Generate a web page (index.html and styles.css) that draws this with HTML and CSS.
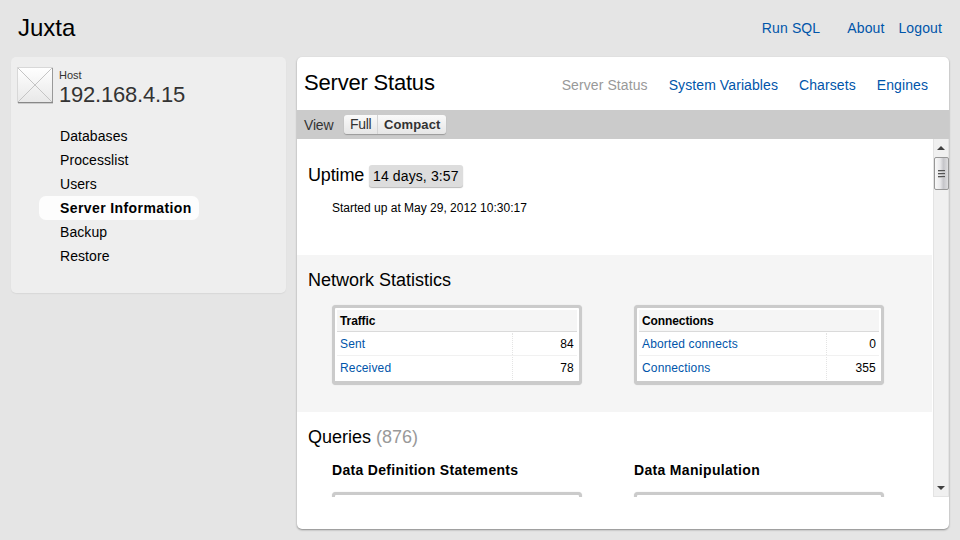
FILE: index.html
```
<!DOCTYPE html>
<html lang="en">
<head>
<meta charset="utf-8">
<title>Juxta</title>
<link rel="stylesheet" href="styles.css">
</head>
<body>
<header class="top">
  <h1 class="brand">Juxta</h1>
  <nav class="top-nav"><a class="run">Run SQL</a><a class="about">About</a><a class="logout">Logout</a></nav>
</header>
<div class="columns">
  <aside class="sidebar">
    <div class="host">
      <svg class="host-icon" width="37" height="38" viewBox="0 0 37 38">
        <defs><linearGradient id="tile" x1="0" y1="0" x2="0" y2="1"><stop offset="0" stop-color="#fff"/><stop offset="1" stop-color="#e8e8e8"/></linearGradient></defs>
        <rect x=".5" y=".5" width="35" height="35" fill="url(#tile)" stroke="#d8d8d8"/>
        <path d="M1 1L35 35M35 1L1 35" stroke="#c4c4c4" fill="none"/>
        <path d="M35.5 1V36" stroke="#999"/><path d="M1 35.5H36" stroke="#888"/><path d="M1 36.5H36" stroke="#ccc"/>
      </svg>
      <div><div class="host-label">Host</div><div class="host-ip">192.168.4.15</div></div>
    </div>
    <nav class="menu">
      <a>Databases</a><a>Processlist</a><a>Users</a><a class="current">Server Information</a><a>Backup</a><a>Restore</a>
    </nav>
  </aside>
  <main class="panel">
    <div class="panel-head">
      <h2 class="title">Server Status</h2>
      <nav class="tabs"><a class="active">Server Status</a><a class="vars">System Variables</a><a class="charsets">Charsets</a><a class="engines">Engines</a></nav>
    </div>
    <div class="view-bar">
      <span class="view-label">View</span>
      <div class="switch"><span class="full">Full</span><span class="compact">Compact</span></div>
    </div>
    <div class="viewport">
      <div class="content">
        <section class="uptime">
          <h3 class="heading"><span class="uptime-word">Uptime</span><span class="badge">14 days, 3:57</span></h3>
          <p class="started">Started up at May 29, 2012 10:30:17</p>
        </section>
        <section class="network">
          <h3 class="heading network-title">Network Statistics</h3>
          <div class="pair">
            <div class="box">
              <div class="box-head">Traffic</div>
              <div class="row"><a>Sent</a><span class="value">84</span></div>
              <div class="row"><a>Received</a><span class="value">78</span></div>
            </div>
            <div class="box narrow">
              <div class="box-head">Connections</div>
              <div class="row"><a>Aborted connects</a><span class="value">0</span></div>
              <div class="row"><a>Connections</a><span class="value">355</span></div>
            </div>
          </div>
        </section>
        <section class="queries">
          <h3 class="heading">Queries <span class="count">(876)</span></h3>
          <div class="pair">
            <div class="group"><h4 class="ddl">Data Definition Statements</h4><div class="box"></div></div>
            <div class="group"><h4 class="dml">Data Manipulation</h4><div class="box"></div></div>
          </div>
        </section>
      </div>
      <div class="scrollbar">
        <svg class="arrow" width="8" height="4" viewBox="0 0 8 4"><path d="M0 4L4 0L8 4Z" fill="#404040"/></svg>
        <div class="thumb"><i></i><i></i><i></i></div>
        <svg class="arrow down" width="8" height="4" viewBox="0 0 8 4"><path d="M0 0H8L4 4Z" fill="#404040"/></svg>
      </div>
    </div>
  </main>
</div>
</body>
</html>
```
FILE: styles.css
```
* { box-sizing: border-box; }
body { margin: 0; width: 960px; height: 540px; overflow: hidden; background: #e5e5e5; color: #000; font: 14px/16px "Liberation Sans", Arial, sans-serif; white-space: nowrap; }
h1, h2, h3, h4, p { margin: 0; font-weight: normal; }
a { color: #0055aa; }

.top { display: flex; justify-content: space-between; height: 57px; padding: 14px 18px 0; }
.brand { font-size: 24px; line-height: 28px; }
.top-nav { display: flex; padding-top: 6px; }
.top-nav a { letter-spacing: .12px; }
.run { margin-right: 27px; }
.about { margin-right: 14px; }

.columns { display: flex; gap: 11px; padding-left: 11px; align-items: flex-start; }
.sidebar { width: 275px; height: 236px; background: #eee; border-radius: 5px; box-shadow: 0 1px 1px #d8d8d8; }
.host { display: flex; height: 67px; padding: 10px 0 0 6px; }
.host-icon { margin-right: 5px; }
.host-label { color: #333; font-size: 11px; line-height: 13px; padding-top: 2px; }
.host-ip { color: #333; font-size: 22px; line-height: 26px; letter-spacing: -.2px; }
.menu { display: flex; flex-direction: column; align-items: flex-start; padding-left: 28px; }
.menu a { color: #000; height: 24px; line-height: 24px; padding: 0 7px 0 21px; letter-spacing: .07px; }
.menu .current { background: #fdfdfd; border-radius: 7px; font-weight: bold; letter-spacing: .4px; }

.panel { width: 652px; height: 472px; background: #fff; border-radius: 5px; box-shadow: 0 1px 2px #888; }
.panel-head { display: flex; justify-content: space-between; height: 53px; padding: 13px 21px 0 7px; }
.title { font-size: 22px; line-height: 26px; letter-spacing: -.2px; }
.tabs { display: flex; gap: 21px; padding-top: 7px; }
.tabs a { letter-spacing: .09px; }
.view-bar { display: flex; align-items: center; height: 29px; padding-left: 7px; background: #cbcbcb; color: #333; }
.tabs .active { color: #999; }
.view-label { width: 40px; letter-spacing: -.2px; }
.switch { display: flex; height: 19px; line-height: 19px; border-radius: 3px; background: linear-gradient(#fafafa, #e6e6e6); box-shadow: 0 1px 1px #999; }
.full { width: 34px; padding-left: 6px; border-right: 1px solid #d4d4d4; letter-spacing: -.3px; }
.compact { width: 68px; padding-left: 6px; font-weight: bold; font-size: 13px; letter-spacing: .12px; }

.viewport { display: flex; height: 358px; overflow: hidden; }
.content { width: 636px; background: linear-gradient(90deg, transparent 635px, #fff 635px); }
.heading { font-size: 18px; line-height: 22px; }
.uptime { height: 116px; padding: 25px 0 0 11px; }
.uptime .heading { display: flex; }
.uptime-word { width: 61px; letter-spacing: -.15px; }
.badge { width: 94px; height: 22px; margin-top: 1px; padding-left: 4px; border-radius: 3px; background: #ddd; box-shadow: 0 1px 1px #bbb; font-size: 14px; line-height: 22px; letter-spacing: .12px; }
.started { padding: 12px 0 0 24px; font-size: 12px; line-height: 18px; }
.network { width: 635px; height: 157px; padding: 14px 0 0 11px; background: #f5f5f5; }
.network .pair { padding-top: 14px; }
.pair { display: flex; gap: 52px; padding-left: 24px; }
.box { width: 250px; height: 80px; padding: 2px; border: 3px solid #cbcbcb; border-bottom-width: 4px; border-radius: 4px; background: #fff; box-shadow: 0 0 1px #ccc; font-size: 12px; }
.box-head { height: 22px; padding-left: 3px; line-height: 22px; background: #f5f5f5; border-bottom: 1px solid #dadada; font-weight: bold; letter-spacing: -.1px; }
.row { display: flex; justify-content: space-between; height: 24px; padding: 1px 0 0 3px; line-height: 22px; border-bottom: 1px solid #f1f1f1; }
.row a { letter-spacing: .15px; }
.row:last-child { border-bottom: 0; }
.value { width: 65px; padding-right: 3px; text-align: right; border-left: 1px dotted #e4e4e4; letter-spacing: .2px; }
.narrow .value { width: 53px; }
.queries { padding: 14px 0 0 11px; }
.count { color: #999; }
.group { width: 250px; }
.group h4 { padding: 14px 0; font-weight: bold; letter-spacing: .32px; }

.scrollbar { display: flex; flex-direction: column; align-items: center; width: 16px; background: #f0f0f0; border: solid #e3e3e3; border-width: 0 1px 1px; }
.arrow { flex: none; margin: 7px 0; }
.thumb { display: flex; flex: none; flex-direction: column; align-items: center; justify-content: center; gap: 2px; width: 15px; height: 33px; border: 1px solid #979797; border-radius: 2px; background: linear-gradient(90deg, #f8f8f8, #e8e8ea 40%, #c6c6ca 65%, #dedee0); }
.thumb i { width: 7px; height: 1px; background: #555; box-shadow: 0 1px #bbb; }
.down { margin-top: auto; margin-bottom: 6px; }
```
